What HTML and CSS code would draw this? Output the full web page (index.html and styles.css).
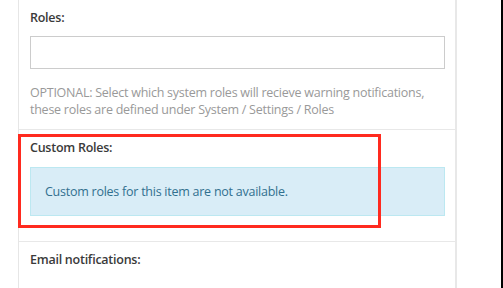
FILE: index.html
```html
<!DOCTYPE html>
<html lang="en">
<head>
    <meta charset="UTF-8">
    <title>Roles</title>
    <link rel="stylesheet" href="styles.css">
</head>
<body>
    <div class="page">
        <div class="panel">
            <div class="form-section">
                <label class="field-label" for="roles">Roles:</label>
                <input type="text" id="roles" class="field-input">
                <p class="help-text">OPTIONAL: Select which system roles will recieve warning notifications, these roles are defined under System / Settings / Roles</p>
            </div>

            <div class="form-section custom-roles">
                <div class="field-label">Custom Roles:</div>
                <div class="alert-info">Custom roles for this item are not available.</div>
                <div class="highlight"></div>
            </div>

            <div class="form-section">
                <div class="field-label">Email notifications:</div>
            </div>
        </div>
        <div class="edge"></div>
    </div>
</body>
</html>
```

FILE: styles.css
```css
body {
    margin: 0;
    background-color: #fff;
    font-family: "Open Sans", Arial, sans-serif;
    font-size: 12.5px;
    letter-spacing: -0.25px;
    color: #333;
}
.page {
    display: flex;
    height: 288px;
    overflow: hidden;
}
.panel {
    margin-left: 18px;
    width: 436px;
    border-left: 1px solid #e6e6e6;
    border-right: 2px solid #e8e8e8;
}
.edge {
    margin-left: auto;
    width: 2px;
    background-color: #000;
}
.form-section {
    padding: 9px 10px 11px 11px;
    border-bottom: 1px solid #e8e8e8;
}
.field-label {
    display: block;
    font-weight: 600;
    color: #3a3a3a;
    margin-bottom: 9px;
    line-height: 18px;
}
.field-input {
    display: block;
    width: 100%;
    height: 33px;
    box-sizing: border-box;
    border: 1px solid #ccc;
    margin: 0;
}
.help-text {
    margin: 15px 0 0;
    color: #999;
    line-height: 17px;
}
.custom-roles {
    position: relative;
    padding-bottom: 25px;
}
.custom-roles .field-label {
    margin-bottom: 10px;
}
.alert-info {
    background-color: #d9edf7;
    border: 1px solid #bce8f1;
    color: #31708f;
    padding: 15px 14px;
    line-height: 17px;
}
.highlight {
    position: absolute;
    left: -1px;
    top: 4px;
    width: 357px;
    height: 88px;
    border: 3px solid #ff2a1f;
}
```
